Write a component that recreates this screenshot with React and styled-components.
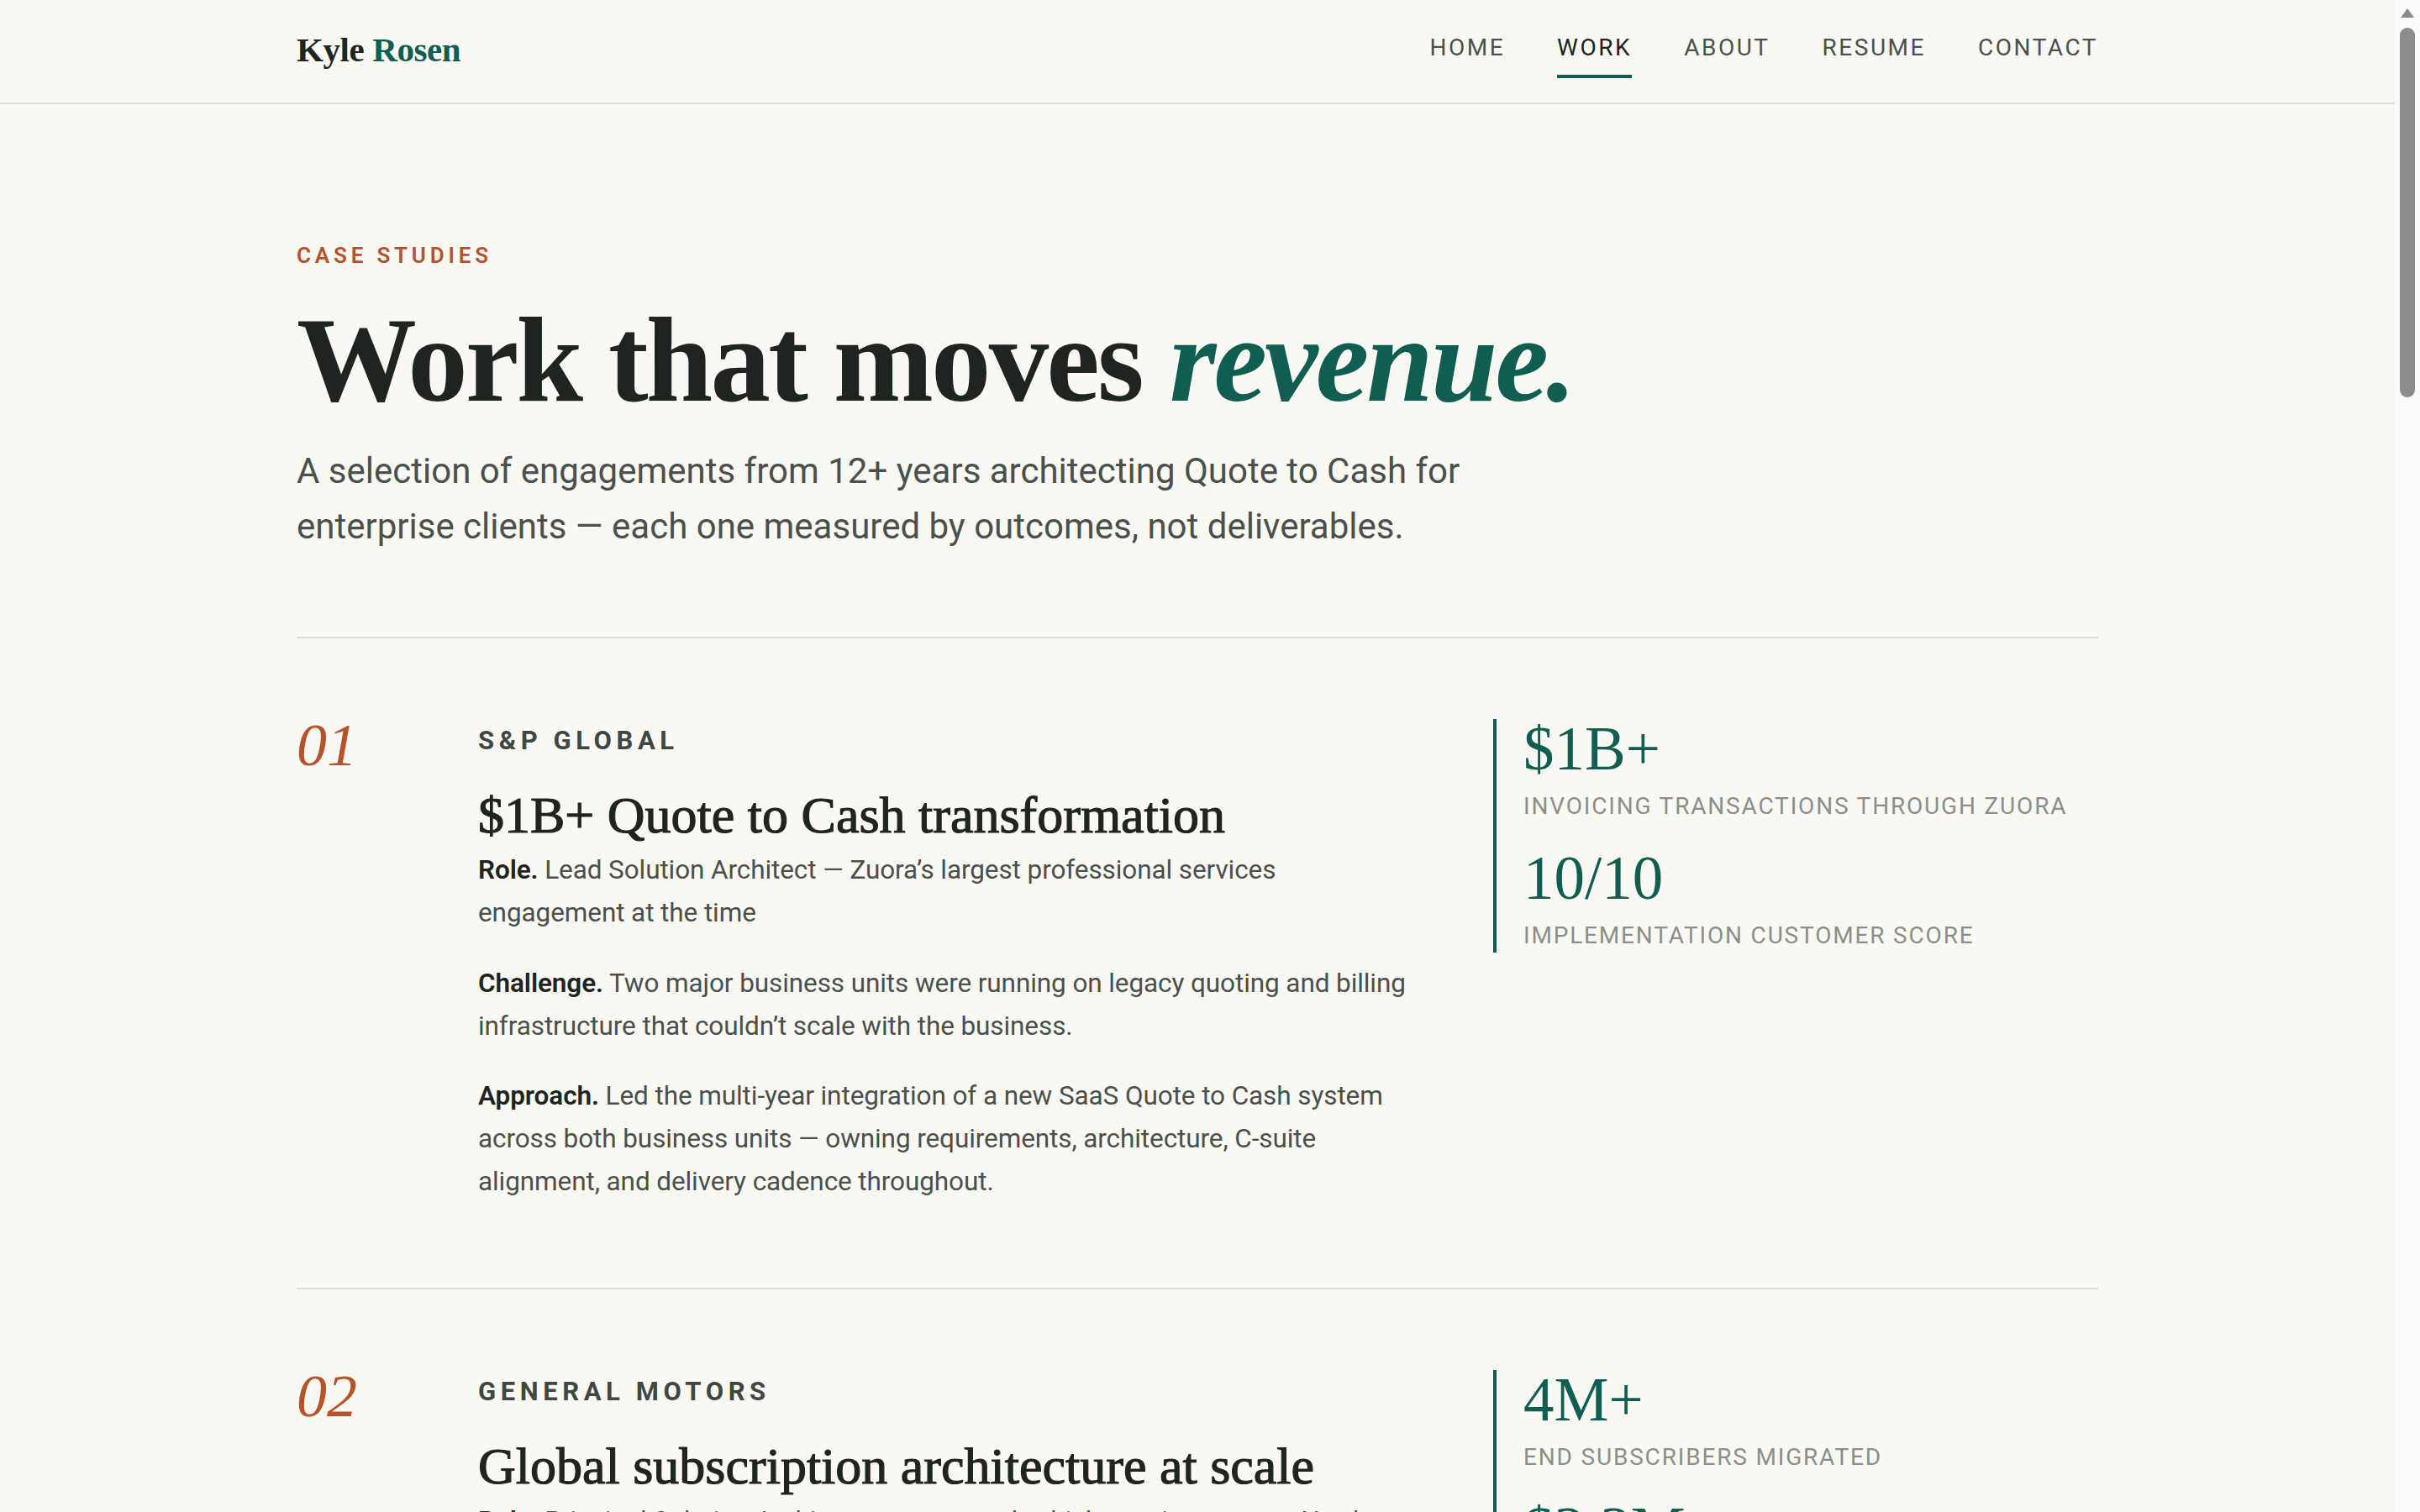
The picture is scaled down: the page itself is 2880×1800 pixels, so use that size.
import React from 'react';
import styled, { createGlobalStyle } from 'styled-components';

const serif = `"Liberation Serif", "DejaVu Serif", serif`;
const sans = `Roboto, "Liberation Sans", Arial, sans-serif`;

const GlobalStyle = createGlobalStyle`
  * { box-sizing: border-box; }
  html, body {
    margin: 0;
    padding: 0;
    background: #faf8f3;
  }
  body {
    padding-right: 30px;
    font-family: ${sans};
    color: #1e2420;
    -webkit-font-smoothing: antialiased;
  }
`;

// browser scrollbar as seen in the screenshot
const ScrollTrack = styled.div`
  position: fixed;
  top: 0;
  right: 0;
  bottom: 0;
  width: 30px;
  background: #fbfbfa;
  z-index: 10;
`;

const ScrollArrow = styled.div`
  margin: 10px auto 0;
  width: 0;
  height: 0;
  border-left: 8px solid transparent;
  border-right: 8px solid transparent;
  border-bottom: 11px solid #8a8a8a;
`;

const ScrollThumb = styled.div`
  margin: 12px auto 0;
  width: 18px;
  height: 440px;
  border-radius: 9px;
  background: #8b8b8b;
`;

const NavBar = styled.header`
  border-bottom: 2px solid #dedcd5;
`;

const NavInner = styled.div`
  max-width: 2240px;
  margin: 0 auto;
  padding: 0 48px;
  height: 122px;
  display: flex;
  align-items: center;
  justify-content: space-between;
`;

const Logo = styled.a`
  padding-bottom: 4px;
  font-family: ${serif};
  font-size: 41px;
  font-weight: 700;
  letter-spacing: -0.01em;
  color: #1e2420;
  text-decoration: none;
  span {
    color: #0f5e51;
  }
`;

const NavLinks = styled.nav`
  display: flex;
  gap: 62px;
  padding-bottom: 8px;
`;

const NavLink = styled.a`
  position: relative;
  font-size: 28px;
  line-height: 40px;
  letter-spacing: 0.09em;
  text-transform: uppercase;
  text-decoration: none;
  color: ${(p) => (p.$active ? '#1e2420' : '#4b514c')};
  &::after {
    content: '';
    display: ${(p) => (p.$active ? 'block' : 'none')};
    position: absolute;
    left: 0;
    right: 0;
    bottom: -16px;
    height: 4px;
    background: #0f5e51;
  }
`;

const Main = styled.main`
  max-width: 2240px;
  margin: 0 auto;
  padding: 0 48px 240px;
`;

const Intro = styled.section`
  padding: 164px 0 98px;
  border-bottom: 2px solid #dedcd5;
`;

const Eyebrow = styled.div`
  font-size: 26px;
  line-height: 32px;
  font-weight: 600;
  letter-spacing: 0.185em;
  text-transform: uppercase;
  color: #b5532b;
`;

const Heading = styled.h1`
  margin: 34px 0 24px;
  font-family: ${serif};
  font-size: 143px;
  line-height: 1.05;
  font-weight: 700;
  letter-spacing: -0.02em;
  color: #1e2420;
  em {
    color: #0f5e51;
    font-style: italic;
  }
`;

const Lede = styled.p`
  margin: 0;
  max-width: 1440px;
  font-size: 42px;
  line-height: 66px;
  color: #4a504b;
`;

const Case = styled.article`
  display: grid;
  grid-template-columns: 136px 1fr 720px;
  column-gap: 80px;
  padding: 96px 0 100px;
  border-bottom: 2px solid #dedcd5;
`;

const Index = styled.div`
  margin-top: -5px;
  font-family: ${serif};
  font-style: italic;
  font-size: 72px;
  line-height: 1;
  color: #b5532b;
`;

const Body = styled.div`
  min-width: 0;
`;

const Client = styled.div`
  padding-top: 6px;
  font-size: 31px;
  line-height: 40px;
  font-weight: 700;
  letter-spacing: 0.18em;
  text-transform: uppercase;
  color: #3f4742;
`;

const CaseTitle = styled.h2`
  margin: 32px 0 4px;
  font-family: ${serif};
  font-size: 62px;
  line-height: 72px;
  font-weight: 400;
  -webkit-text-stroke: 1.2px #1e2420;
  color: #1e2420;
`;

const Para = styled.p`
  margin: 0 0 32px;
  font-size: 31.5px;
  line-height: 51.2px;
  letter-spacing: -0.003em;
  color: #4a504b;
  &:last-child {
    margin-bottom: 0;
  }
  strong {
    font-weight: 600;
    color: #1e2420;
  }
`;

const Metrics = styled.aside`
  align-self: start;
  display: flex;
  flex-direction: column;
  gap: 30px;
  padding-left: 32px;
  border-left: 4px solid #0f5e51;
`;

const Metric = styled.div`
  display: flex;
  flex-direction: column;
  gap: 12px;
`;

const MetricValue = styled.div`
  font-family: ${serif};
  font-size: 73px;
  line-height: 72px;
  color: #0f5e51;
`;

const MetricLabel = styled.div`
  font-size: 28px;
  line-height: 40px;
  letter-spacing: 0.065em;
  text-transform: uppercase;
  color: #8a8f89;
`;

const cases = [
  {
    client: 'S&P Global',
    title: '$1B+ Quote to Cash transformation',
    role: 'Lead Solution Architect — Zuora’s largest professional services engagement at the time',
    challenge:
      'Two major business units were running on legacy quoting and billing infrastructure that couldn’t scale with the business.',
    approach:
      'Led the multi-year integration of a new SaaS Quote to Cash system across both business units — owning requirements, architecture, C-suite alignment, and delivery cadence throughout.',
    metrics: [
      ['$1B+', 'Invoicing transactions through Zuora'],
      ['10/10', 'Implementation customer score'],
    ],
  },
  {
    client: 'General Motors',
    title: 'Global subscription architecture at scale',
    role: 'Principal Solution Architect — connected vehicle services across North America',
    challenge:
      'Millions of in-vehicle subscribers were managed across disconnected platforms, with no single view of the customer or their entitlements.',
    approach:
      'Designed the target subscription model, migration strategy and order-to-revenue flows, partnering with product, finance and engineering leadership.',
    metrics: [
      ['4M+', 'End subscribers migrated'],
      ['$2.3M', 'Annual operating savings'],
    ],
  },
  {
    client: 'Siemens',
    title: 'Usage-based billing for industrial software',
    role: 'Solution Architect — global rollout across three regions',
    challenge:
      'A shift from perpetual licences to consumption pricing required rating and invoicing that the existing ERP could not support.',
    approach:
      'Defined the usage mediation design, pricing catalog and revenue recognition rules, and guided the phased go-live across regions.',
    metrics: [
      ['3', 'Regions live on one platform'],
      ['60%', 'Faster invoice close'],
    ],
  },
  {
    client: 'Dropbox',
    title: 'Self-serve to sales-led Quote to Cash',
    role: 'Lead Architect — CPQ and billing integration',
    challenge:
      'Sales-assisted deals were quoted in spreadsheets and keyed into billing by hand, creating errors and slow cash collection.',
    approach:
      'Connected CPQ, billing and the CRM into a single order flow with approvals, amendments and renewals handled end to end.',
    metrics: [
      ['90%', 'Fewer manual order touches'],
      ['12 days', 'Reduction in DSO'],
    ],
  },
  {
    client: 'Zendesk',
    title: 'Pricing and packaging modernization',
    role: 'Solution Architect — product catalog redesign',
    challenge:
      'Years of one-off plans and add-ons had produced a catalog too complex for sales, finance or customers to navigate.',
    approach:
      'Rationalized the catalog into tiered bundles with clear upgrade paths, and migrated the installed base without disruption.',
    metrics: [
      ['70%', 'Fewer SKUs in the catalog'],
      ['0', 'Billing incidents at cutover'],
    ],
  },
];

export default function App() {
  return (
    <>
      <GlobalStyle />
      <ScrollTrack>
        <ScrollArrow />
        <ScrollThumb />
      </ScrollTrack>
      <NavBar>
        <NavInner>
          <Logo href="#">
            Kyle <span>Rosen</span>
          </Logo>
          <NavLinks>
            <NavLink href="#">Home</NavLink>
            <NavLink href="#" $active>
              Work
            </NavLink>
            <NavLink href="#">About</NavLink>
            <NavLink href="#">Resume</NavLink>
            <NavLink href="#">Contact</NavLink>
          </NavLinks>
        </NavInner>
      </NavBar>
      <Main>
        <Intro>
          <Eyebrow>Case studies</Eyebrow>
          <Heading>
            Work that moves <em>revenue.</em>
          </Heading>
          <Lede>
            A selection of engagements from 12+ years architecting Quote to Cash for enterprise
            clients — each one measured by outcomes, not deliverables.
          </Lede>
        </Intro>
        {cases.map((c, i) => (
          <Case key={c.client}>
            <Index>{String(i + 1).padStart(2, '0')}</Index>
            <Body>
              <Client>{c.client}</Client>
              <CaseTitle>{c.title}</CaseTitle>
              <Para>
                <strong>Role.</strong> {c.role}
              </Para>
              <Para>
                <strong>Challenge.</strong> {c.challenge}
              </Para>
              <Para>
                <strong>Approach.</strong> {c.approach}
              </Para>
            </Body>
            <Metrics>
              {c.metrics.map(([value, label]) => (
                <Metric key={label}>
                  <MetricValue>{value}</MetricValue>
                  <MetricLabel>{label}</MetricLabel>
                </Metric>
              ))}
            </Metrics>
          </Case>
        ))}
      </Main>
    </>
  );
}
